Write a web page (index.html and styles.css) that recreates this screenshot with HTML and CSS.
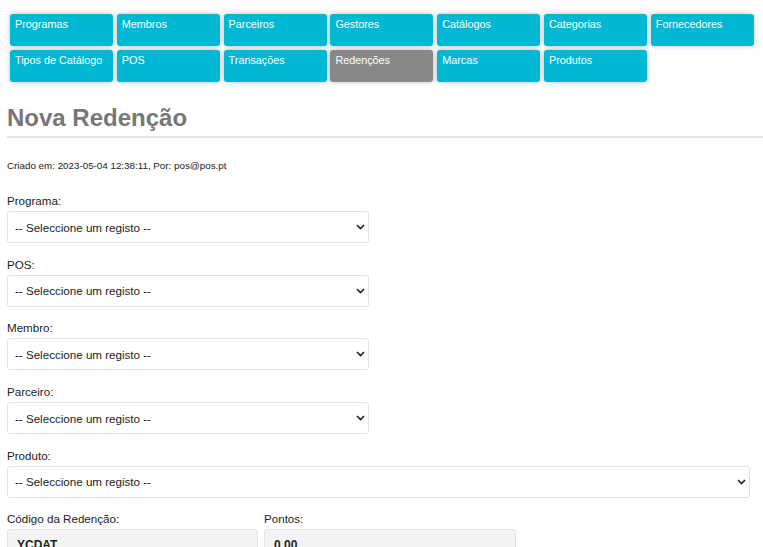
FILE: index.html
```html
<!DOCTYPE html>
<html lang="pt">
<head>
<meta charset="utf-8">
<title>Nova Redenção</title>
<link rel="stylesheet" href="styles.css">
</head>
<body>
<nav class="menu">
  <a class="menu-btn">Programas</a>
  <a class="menu-btn">Membros</a>
  <a class="menu-btn">Parceiros</a>
  <a class="menu-btn">Gestores</a>
  <a class="menu-btn">Catálogos</a>
  <a class="menu-btn">Categorias</a>
  <a class="menu-btn">Fornecedores</a>
  <a class="menu-btn">Tipos de Catálogo</a>
  <a class="menu-btn">POS</a>
  <a class="menu-btn">Transações</a>
  <a class="menu-btn active">Redenções</a>
  <a class="menu-btn">Marcas</a>
  <a class="menu-btn">Produtos</a>
</nav>
<main class="content">
  <h1 class="title">Nova Redenção</h1>
  <p class="meta">Criado em: 2023-05-04 12:38:11, Por: pos@pos.pt</p>

  <div class="field">
    <label class="label">Programa:</label>
    <div class="select">
      <span>-- Seleccione um registo --</span>
      <svg class="chev" width="9" height="6" viewBox="0 0 9 6"><path d="M1 1l3.5 3.5L8 1" fill="none" stroke="#222" stroke-width="1.6"/></svg>
    </div>
  </div>
  <div class="field">
    <label class="label">POS:</label>
    <div class="select">
      <span>-- Seleccione um registo --</span>
      <svg class="chev" width="9" height="6" viewBox="0 0 9 6"><path d="M1 1l3.5 3.5L8 1" fill="none" stroke="#222" stroke-width="1.6"/></svg>
    </div>
  </div>
  <div class="field">
    <label class="label">Membro:</label>
    <div class="select">
      <span>-- Seleccione um registo --</span>
      <svg class="chev" width="9" height="6" viewBox="0 0 9 6"><path d="M1 1l3.5 3.5L8 1" fill="none" stroke="#222" stroke-width="1.6"/></svg>
    </div>
  </div>
  <div class="field">
    <label class="label">Parceiro:</label>
    <div class="select">
      <span>-- Seleccione um registo --</span>
      <svg class="chev" width="9" height="6" viewBox="0 0 9 6"><path d="M1 1l3.5 3.5L8 1" fill="none" stroke="#222" stroke-width="1.6"/></svg>
    </div>
  </div>
  <div class="field">
    <label class="label">Produto:</label>
    <div class="select wide">
      <span>-- Seleccione um registo --</span>
      <svg class="chev" width="9" height="6" viewBox="0 0 9 6"><path d="M1 1l3.5 3.5L8 1" fill="none" stroke="#222" stroke-width="1.6"/></svg>
    </div>
  </div>
  <div class="pair">
    <div class="field">
      <label class="label">Código da Redenção:</label>
      <div class="input">YCDAT</div>
    </div>
    <div class="field">
      <label class="label">Pontos:</label>
      <div class="input">0.00</div>
    </div>
  </div>
</main>
</body>
</html>
```
FILE: styles.css
```css
html, body {
  margin: 0;
  padding: 0;
  background: #fff;
  font-family: "Liberation Sans", Arial, sans-serif;
  color: #222;
}
.menu {
  display: grid;
  grid-template-columns: repeat(7, 103px);
  column-gap: 3.8px;
  row-gap: 4px;
  padding: 14px 0 0 10px;
}
.menu-btn {
  display: block;
  height: 32px;
  box-sizing: border-box;
  background: #00b8d4;
  color: #fff;
  font-size: 10.8px;
  padding: 4px 5px;
  border-radius: 3px;
  box-shadow: 0 0 5px rgba(0,0,0,0.25);
}
.menu-btn.active {
  background: #888888;
}
.content {
  padding: 0 13px 0 7px;
}
.title {
  margin: 21px -13px 0 0;
  font-size: 24px;
  font-weight: bold;
  color: #777;
  line-height: 30px;
  padding-bottom: 3px;
  border-bottom: 2px solid #e6e6e6;
}
.meta {
  margin: 21px 0 0 0;
  font-size: 9.8px;
  line-height: 14px;
  color: #222;
}
.field {
  margin-top: 13.7px;
}
.meta + .field {
  margin-top: 20px;
}
.label {
  display: block;
  font-size: 11.6px;
  line-height: 16px;
  margin-bottom: 2px;
  color: #222;
}
.select {
  width: 362px;
  height: 32px;
  box-sizing: border-box;
  border: 1px solid #e2e2e2;
  border-radius: 3px;
  display: flex;
  align-items: center;
  justify-content: space-between;
  padding: 0 3px 0 7px;
  font-size: 11.6px;
  color: #222;
}
.select.wide {
  width: 743px;
}
.chev {
  display: block;
}
.pair {
  display: grid;
  grid-template-columns: 251px 252px;
  column-gap: 6px;
}
.input {
  height: 32px;
  box-sizing: border-box;
  border: 1px solid #e2e2e2;
  border-radius: 3px;
  background: #f4f4f4;
  padding: 8px 9px;
  font-size: 12px;
  font-weight: bold;
  color: #222;
}
```
